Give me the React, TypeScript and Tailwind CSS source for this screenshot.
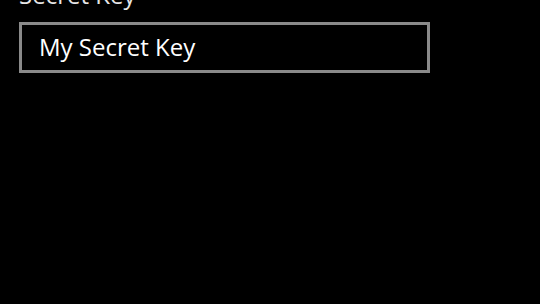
export default function App() {
  return (
    <div
      className="w-[540px] h-[304px] bg-black overflow-hidden pl-[19px]"
      style={{ fontFamily: '"Open Sans", "Noto Sans", sans-serif' }}
    >
      <div className="mt-[-17.3px] text-[24px] leading-[24px] text-[#e6e6e6]">Secret Key</div>
      <div className="mt-[15.3px] w-[411px] h-[51px] border-[3px] border-[#8a8a8a] pl-[17px] pt-[9.7px] text-[24px] leading-[24px] text-white">
        My Secret Key
      </div>
    </div>
  );
}
